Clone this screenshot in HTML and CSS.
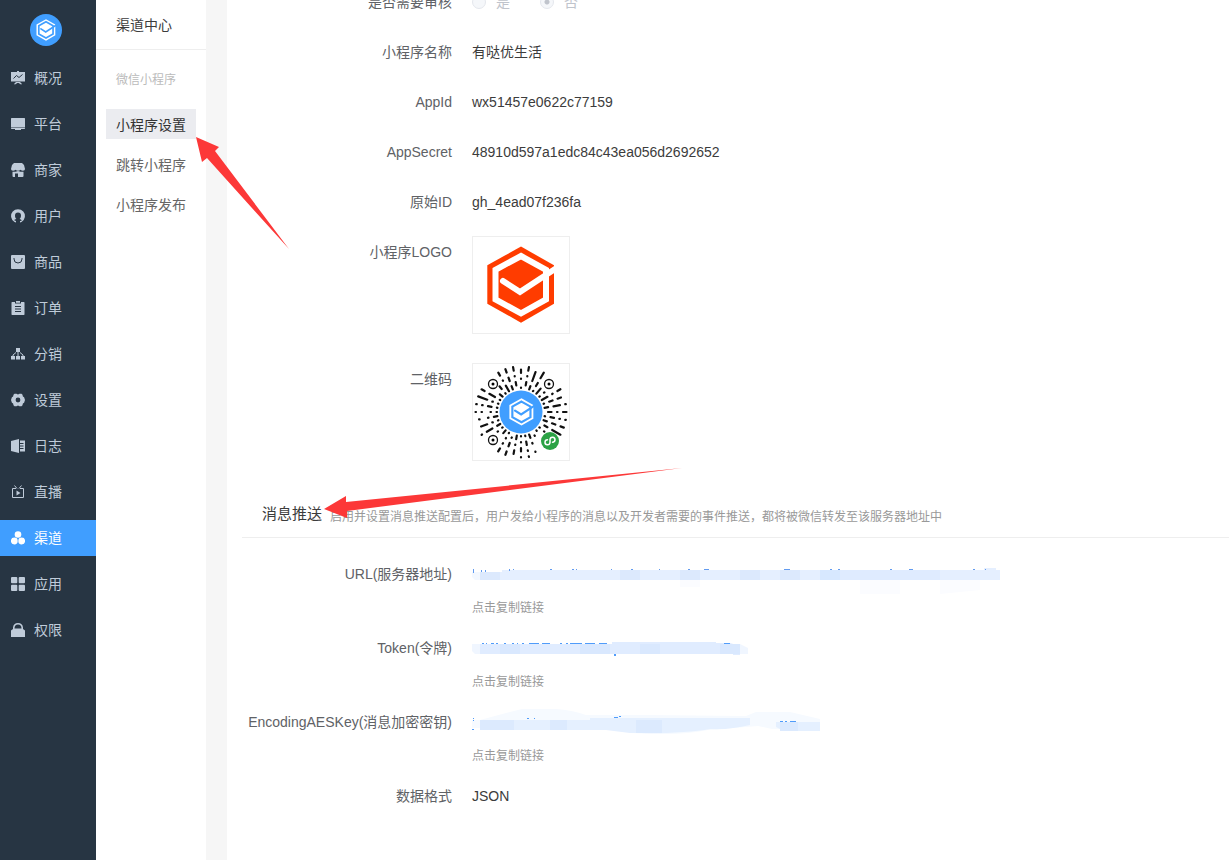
FILE: index.html
```
<!DOCTYPE html>
<html lang="zh-CN">

  <head>
    <meta charset="UTF-8">
    <meta name="viewport" content="width=device-width, initial-scale=1.0">
    <title>小程序设置</title>
    <link rel="stylesheet" href="styles.css">
  </head>

  <body>
    <svg class="defs" aria-hidden="true">
      <symbol id="brand" viewBox="15 10 68 78">
        <path class="brand-fill" d="M49 10.5 82 29.3V67.7L49 86.7 15.3 67.7V29.3Z" />
        <path class="brand-line" d="M49 20 74 33.8V63.4L49 77.3 23.5 63.4V33.8Z" />
        <path class="brand-line" stroke-linecap="round" d="M31 45 48 56 86 31" />
      </symbol>
    </svg>

    <nav class="sidebar">
      <a class="logo" href="#" aria-label="首页"><svg><use href="#brand" /></svg></a>
      <a class="nav-item" href="#">
        <svg viewBox="0 0 14 14"><path d="M0 1h6V0h2v1h6v9.500H0zM5 11h4l2 2-1 .6L7.600 12H6.400L4 13.600 3 13z" /><path class="cut" d="M2.500 7.500 5.500 4.500 8 6.500 11.500 3.500" /></svg>
        <span>概况</span>
      </a>
      <a class="nav-item" href="#">
        <svg viewBox="0 0 14 14"><path d="M.5 1h13l.5.5v8.700H0V1.500zM0 10.700h14v.8l-.5.5H10v1H4v-1H.5l-.5-.5z" /></svg>
        <span>平台</span>
      </a>
      <a class="nav-item" href="#">
        <svg viewBox="0 0 14 14"><path d="M3 0h8l2 2 1 4q0 1.800-2 1.800-1.500 0-2.500-1-1 1-2.500 1t-2.500-1q-1 1-2.500 1Q0 7.800 0 6l1-4zM1.500 8.700h3l2.500-.8 2.500.8h3V13q0 1-1 1H7v-3.500H4V14H2.500q-1 0-1-1z" /></svg>
        <span>商家</span>
      </a>
      <a class="nav-item" href="#">
        <svg viewBox="0 0 14 14"><path d="M3.500 13A6.900 6.900 0 1 1 10.500 13L9 13.500V12q1.800-.3 1.800-.8-.8-.9-2.200-1.300C9.600 9 10 8 10 6.500 10 4.500 9 3.500 7 3.500S4 4.500 4 6.500C4 8 4.400 9 5.400 9.900 4 10.300 3.200 10.700 3.200 11.200L5 12v1.500z" /></svg>
        <span>用户</span>
      </a>
      <a class="nav-item" href="#">
        <svg viewBox="0 0 14 14"><rect width="14" height="14" rx="1" /><path class="cut" d="M3 3v1a4 4 0 0 0 8 0V3" /></svg>
        <span>商品</span>
      </a>
      <a class="nav-item" href="#">
        <svg viewBox="0 0 14 14"><path d="M1 1h3v1.500h6V1h3l.5.5v12l-.5.500H1l-.5-.5v-12zM5 0h4v1.700H5z" /><path class="cut" d="M4 5.500h6M4 8h6M4 10.500h6" /></svg>
        <span>订单</span>
      </a>
      <a class="nav-item" href="#">
        <svg viewBox="0 0 14 14"><path d="M5 1h4v4H5zM0 9h4v3.500H0zM5 9h4v3.500H5zM10 9h4v3.500h-4z" /><path class="line" d="M7 5v4M2 9V8L5 5.500M12 9V8L9 5.500" /></svg>
        <span>分销</span>
      </a>
      <a class="nav-item" href="#">
        <svg viewBox="0 0 14 14"><path fill-rule="evenodd" d="M3.500.8h2L7 1.600 8.500.8h2l1 1 .4 1.700 1.200.8L14 7l-.9 2.700-1.200.8-.4 1.700-1 1h-2L7 12.400l-1.500.8h-2l-1-1-.4-1.700-1.200-.8L0 7l.9-2.700 1.200-.8.4-1.700zM7 4.600a2.400 2.400 0 1 0 0 4.800 2.400 2.400 0 0 0 0-4.800Z" /></svg>
        <span>设置</span>
      </a>
      <a class="nav-item" href="#">
        <svg viewBox="0 0 14 14"><path d="M0 2 8 0v14L0 12zM9 1.500h5v11H9z" /><path class="cut" d="M9 4.500h3.500M9 7h3.500M9 9.500h3.500" /></svg>
        <span>日志</span>
      </a>
      <a class="nav-item" href="#">
        <svg viewBox="0 0 14 14"><path class="line" d="M5 3.500H1.500v9h11v-9H9M3.500.5 6 3.500M10.500.5 8 3.500" /><path d="M5.500 5.500 9.500 8l-4 2.500z" /></svg>
        <span>直播</span>
      </a>
      <a class="nav-item active" href="#">
        <svg viewBox="0 0 14 14"><circle cx="7" cy="3.500" r="3.300" /><circle cx="3.300" cy="10" r="3.400" /><circle cx="10.700" cy="10" r="3.400" /></svg>
        <span>渠道</span>
      </a>
      <a class="nav-item" href="#">
        <svg viewBox="0 0 14 14"><rect width="6.300" height="6.300" rx="1" /><rect x="7.700" width="6.300" height="6.300" rx="1" /><rect y="7.700" width="6.300" height="6.300" rx="1" /><rect x="7.700" y="7.700" width="6.300" height="6.300" rx="1" /></svg>
        <span>应用</span>
      </a>
      <a class="nav-item" href="#">
        <svg viewBox="0 0 14 14"><path fill-rule="evenodd" d="M2 6V4.500Q2.500 0 7 0t5 4.500V6l2 1.500V14H0V7.500zM3.500 5.500h7Q10.500 1.500 7 1.500T3.500 5.500Z" /></svg>
        <span>权限</span>
      </a>
    </nav>

    <aside class="submenu">
      <h1>渠道中心</h1>
      <h2>微信小程序</h2>
      <a class="active" href="#">小程序设置</a>
      <a href="#">跳转小程序</a>
      <a href="#">小程序发布</a>
    </aside>

    <main>
      <form class="content">
        <div class="row">
          <span class="label">是否需要审核</span>
          <div class="value radios">
            <label><input type="radio" name="audit" disabled>是</label>
            <label><input type="radio" name="audit" checked disabled>否</label>
          </div>
        </div>
        <div class="row">
          <span class="label">小程序名称</span>
          <div class="value">有哒优生活</div>
        </div>
        <div class="row">
          <span class="label">AppId</span>
          <div class="value">wx51457e0622c77159</div>
        </div>
        <div class="row">
          <span class="label">AppSecret</span>
          <div class="value">48910d597a1edc84c43ea056d2692652</div>
        </div>
        <div class="row">
          <span class="label">原始ID</span>
          <div class="value">gh_4ead07f236fa</div>
        </div>
        <div class="row">
          <span class="label">小程序LOGO</span>
          <div class="picture"><svg class="mark" role="img" aria-label="LOGO"><use href="#brand" /></svg></div>
        </div>
        <div class="row">
          <span class="label">二维码</span>
          <div class="picture">
            <svg class="code" viewBox="0 0 96 96" role="img" aria-label="二维码">
              <g id="spokes"></g>
              <g class="eye">
                <circle cx="20" cy="20" r="4.500" /><circle cx="76" cy="20" r="4.500" /><circle cx="20" cy="76" r="4.500" />
              </g>
              <circle cx="20" cy="20" r="1.500" /><circle cx="76" cy="20" r="1.500" /><circle cx="20" cy="76" r="1.500" />
              <circle class="blue" cx="48" cy="48" r="21.500" />
              <use href="#brand" x="36" y="34" width="25" height="28" />
              <circle class="green" cx="77" cy="77" r="9" />
              <path class="swirl" d="M74.500 75.800a2.500 2.500 0 1 0 2.500 2.700V75.500a2.500 2.500 0 1 1 2.500 2.700" />
            </svg>
          </div>
        </div>

        <div class="section-title">
          <h3>消息推送</h3>
          <p>启用并设置消息推送配置后，用户发给小程序的消息以及开发者需要的事件推送，都将被微信转发至该服务器地址中</p>
        </div>

        <div class="row">
          <span class="label">URL(服务器地址)</span>
          <div class="value">
            <svg class="masked" viewBox="0 0 540 40" role="img" aria-label="URL">
              <path fill="#f3f8ff" d="M0 18h8v8H3l-3-3z" />
              <path fill="#e5efff" d="M8 18h22v-2h482v-2h12v2h4v10H8z" />
              <path fill="#dce9fd" d="M8 18h20v8H8zM148 16h20v10h-20zM208 16h20v10h-20zM268 16h20v10h-20zM308 16h20v10h-20z" />
              <path fill="#d7e8ff" d="M348 16h20v10h-20z" />
              <path fill="#dfebff" d="M368 16h100v10H368z" />
              <path fill="#fbfcff" d="M208 26h20v7h-20zM388 26h40v14h-40zM468 26h40v10l-40 4z" />
              <path fill="#629bf0" d="M1 15h1v4H1zM9 16h1v2H9zM13 16h1v2h-1zM37 15h1v2h-1zM41 15h1v1h-1zM78 15h2v1h-2zM100 15h2v1h-2zM104 15h1v1h-1zM139 15h1v1h-1zM159 15h2v1h-2zM187 15h1v1h-1zM216 15h2v1h-2zM232 15h5v1h-5zM312 15h6v1h-6zM358 15h2v1h-2zM366 15h2v1h-2zM418 15h2v1h-2zM437 15h4v1h-4zM501 15h2v1h-2zM513 15h1v1h-1z" />
            </svg>
            <button type="button">点击复制链接</button>
          </div>
        </div>
        <div class="row">
          <span class="label">Token(令牌)</span>
          <div class="value">
            <svg class="masked" viewBox="0 0 540 40" role="img" aria-label="Token">
              <path fill="#f0f6ff" d="M0 16h8v10H3l-3-3zM268 16l8 4v6h-8z" />
              <path fill="#e0ecff" d="M8 16h132v-2h104v1h14l10 3v9h-7v-1H8z" />
              <path fill="#d9e8fe" d="M28 16h20v10H28zM108 16h30v10h-30zM168 16h20v10h-20zM248 16h20v10h-20z" />
              <path fill="#509cfa" d="M10 15h2v1h-2zM14 15h1v1h-1zM19 15h3v1h-3zM24 15h2v1h-2zM32 15h2v1h-2zM40 15h2v1h-2zM45 15h1v1h-1zM50 15h2v1h-2zM57 15h10v1H57zM70 15h8v1h-8zM88 15h2v1h-2zM94 15h2v1h-2zM98 15h12v1H98zM113 15h10v1h-10zM127 15h8v1h-8zM142 26h2v2h-2zM252 15h6v1h-6z" />
            </svg>
            <button type="button">点击复制链接</button>
          </div>
        </div>
        <div class="row">
          <span class="label">EncodingAESKey(消息加密密钥)</span>
          <div class="value">
            <svg class="masked" viewBox="0 0 540 40" role="img" aria-label="EncodingAESKey">
              <path fill="#f6faff" d="M0 18h8l26-7 16-4h34q16 1 30 6h60l100 1 10-4h34l30 7v10h-48l-14-3-50 4q-30 6-68 3l-32-5H0z" />
              <path fill="#e5f0ff" d="M8 18h110v-2h160v7q-20 5-40 4-26 5-80 4l-24-3H8zM304 20h44v9h-36l-8-4z" />
              <path fill="#dceafe" d="M8 18h34v10H8zM78 18h17v10H78zM164 18h26v13h-26zM308 20h18v9h-18z" />
              <path fill="#509cfa" d="M1 16h1v1H1zM1 18h1v1H1zM0 27h2v1H0zM55 16h2v1h-2zM62 16h1v1h-1zM142 15h4v1h-4zM147 14h2v1h-2zM308 19h3v1h-3zM313 19h2v1h-2zM318 19h6v1h-6z" />
            </svg>
            <button type="button">点击复制链接</button>
          </div>
        </div>
        <div class="row">
          <span class="label">数据格式</span>
          <div class="value">JSON</div>
        </div>
      </form>
    </main>

    <svg class="arrows" aria-hidden="true">
      <path d="M196 137 219 147 215 151 289 249 207 158 202 162Z" />
      <path d="M324 509 346 496V502L682 468 347 511V518Z" />
    </svg>

    <script>
      // One string per spoke, clockwise from the top. Each mark is a step outward:
      // 1 = ink, 0 = gap
      const spokes = [
        '10010110', '01101011', '11011110', '10110111', '11100000', '10100000',
        '11101011', '10110110', '11011101', '01101011', '10110101', '11011011',
        '01101111', '10100000', '10000000', '01000000', '11010010', '10110101',
        '10101101', '11010110', '01011011', '10101011', '11000000', '10100000',
        '11011101', '10101110', '11010010', '10100101', '10110101', '10101111',
        '10111011', '11000000', '10110000', '11101011', '11011011', '01101011'
      ];
      let d = '';
      spokes.forEach((bits, i) => {
        const angle = i * Math.PI / 18;
        const point = r => (48 + r * Math.sin(angle)).toFixed(1) + ' ' + (48 - r * Math.cos(angle)).toFixed(1);
        for (const run of bits.matchAll(/1+/g)) {
          const start = 24 + run.index * 3;
          d += `M${point(start)}L${point(start + (run[0].length - 1) * 3 + 0.5)}`;
        }
      });
      document.getElementById('spokes').innerHTML = `<path d="${d}" />`;
    </script>
  </body>

</html>
```
FILE: styles.css
```
* {
  box-sizing: border-box;
}

body {
  position: relative;
  display: flex;
  height: 100vh;
  margin: 0;
  overflow: hidden;
  background: #f6f6f6;
  color: #3c3c3c;
  font-family: "Liberation Sans", "Noto Sans CJK SC", sans-serif;
  font-size: 14px;
}

a {
  color: inherit;
  text-decoration: none;
}

h1,
h2,
h3,
p {
  margin: 0;
  font-weight: normal;
}

.defs {
  position: absolute;
  width: 0;
  height: 0;
}

/* brand mark, recoloured through --mark and --gap */
.brand-fill {
  fill: var(--mark);
}

.brand-line {
  fill: none;
  stroke: var(--gap);
  stroke-width: 6;
}

/* left navigation */
.sidebar {
  display: flex;
  flex: none;
  flex-direction: column;
  gap: 10px;
  width: 96px;
  padding-top: 14px;
  background: #273543;
  color: #bfcbd9;
}

.logo {
  --mark: #fff;
  --gap: #409eff;
  display: flex;
  align-items: center;
  justify-content: center;
  width: 32px;
  height: 32px;
  margin: 0 0 4px 30px;
  border-radius: 50%;
  background: #409eff;
}

.logo svg {
  width: 20px;
  height: 22px;
}

.nav-item {
  display: flex;
  align-items: center;
  gap: 9px;
  height: 36px;
  padding-left: 11px;
}

.nav-item span {
  padding-bottom: 2px;
}

.nav-item svg {
  width: 14px;
  height: 14px;
  fill: currentColor;
}

.nav-item .cut,
.nav-item .line {
  fill: none;
  stroke: #273543;
}

.nav-item .line {
  stroke: currentColor;
}

.nav-item.active {
  background: #409eff;
  color: #fff;
}

/* second level menu */
.submenu {
  flex: none;
  width: 110px;
  background: #fff;
}

.submenu h1 {
  height: 50px;
  padding-left: 20px;
  border-bottom: 1px solid #eee;
  font-size: 14px;
  line-height: 50px;
}

.submenu h2 {
  padding: 20px 0 0 20px;
  color: #bbb;
  font-size: 12px;
  line-height: 20px;
}

.submenu a {
  display: block;
  height: 30px;
  margin: 10px 10px 0;
  padding-left: 10px;
  color: #666;
  line-height: 32px;
}

.submenu h2 + a {
  margin-top: 19px;
}

.submenu a.active {
  background: #ebecf0;
  color: #333;
}

/* settings form, scrolled down a little */
main {
  flex: 1;
  min-width: 0;
  margin-left: 21px;
  overflow: hidden;
  background: #fff;
}

.content {
  margin-top: -18px;
  padding-left: 15px;
}

.row {
  display: flex;
  gap: 20px;
  margin-bottom: 10px;
  line-height: 40px;
}

.label {
  flex: none;
  width: 210px;
  color: #606266;
  text-align: right;
  white-space: nowrap;
}

.radios {
  display: flex;
  gap: 30px;
  color: #c0c4cc;
}

.radios label {
  display: flex;
  align-items: center;
  gap: 10px;
}

.radios input {
  appearance: none;
  width: 14px;
  height: 14px;
  margin: 0;
  border: 1px solid #e4e7ed;
  border-radius: 50%;
  background: #f5f7fa;
}

.radios input:checked {
  background: radial-gradient(#c0c4cc 2px, #f5f7fa 3px);
}

.picture {
  display: flex;
  align-items: center;
  justify-content: center;
  width: 98px;
  height: 98px;
  margin: 4px 0 15px;
  border: 1px solid #eee;
}

.mark {
  --mark: #ff3c00;
  --gap: #fff;
  width: 68px;
  height: 78px;
}

.code {
  --mark: #fff;
  --gap: #409eff;
  width: 96px;
  height: 96px;
}

#spokes,
.eye {
  fill: none;
  stroke: #111;
  stroke-width: 2.2;
  stroke-linecap: round;
}

.eye {
  stroke-width: 1.3;
}

.blue {
  fill: #409eff;
}

.green {
  fill: #2ba245;
}

.swirl {
  fill: none;
  stroke: #fff;
  stroke-width: 1.5;
  stroke-linecap: round;
}

.section-title {
  display: flex;
  gap: 8px;
  height: 52px;
  margin-bottom: 16px;
  padding-left: 20px;
  border-bottom: 1px solid #eee;
  line-height: 56px;
  white-space: nowrap;
}

.section-title h3 {
  font-size: 15px;
}

.section-title p {
  color: #999;
  font-size: 12px;
  line-height: 62px;
}

.masked {
  display: block;
  width: 540px;
  height: 40px;
}

.value button {
  display: block;
  padding: 4px 0 0;
  border: 0;
  background: none;
  color: #999;
  font: inherit;
  font-size: 12px;
  line-height: 20px;
  cursor: pointer;
}

/* callouts over the page */
.arrows {
  position: absolute;
  top: 0;
  left: 0;
  width: 700px;
  height: 530px;
  fill: #fc3838;
  pointer-events: none;
}
```
